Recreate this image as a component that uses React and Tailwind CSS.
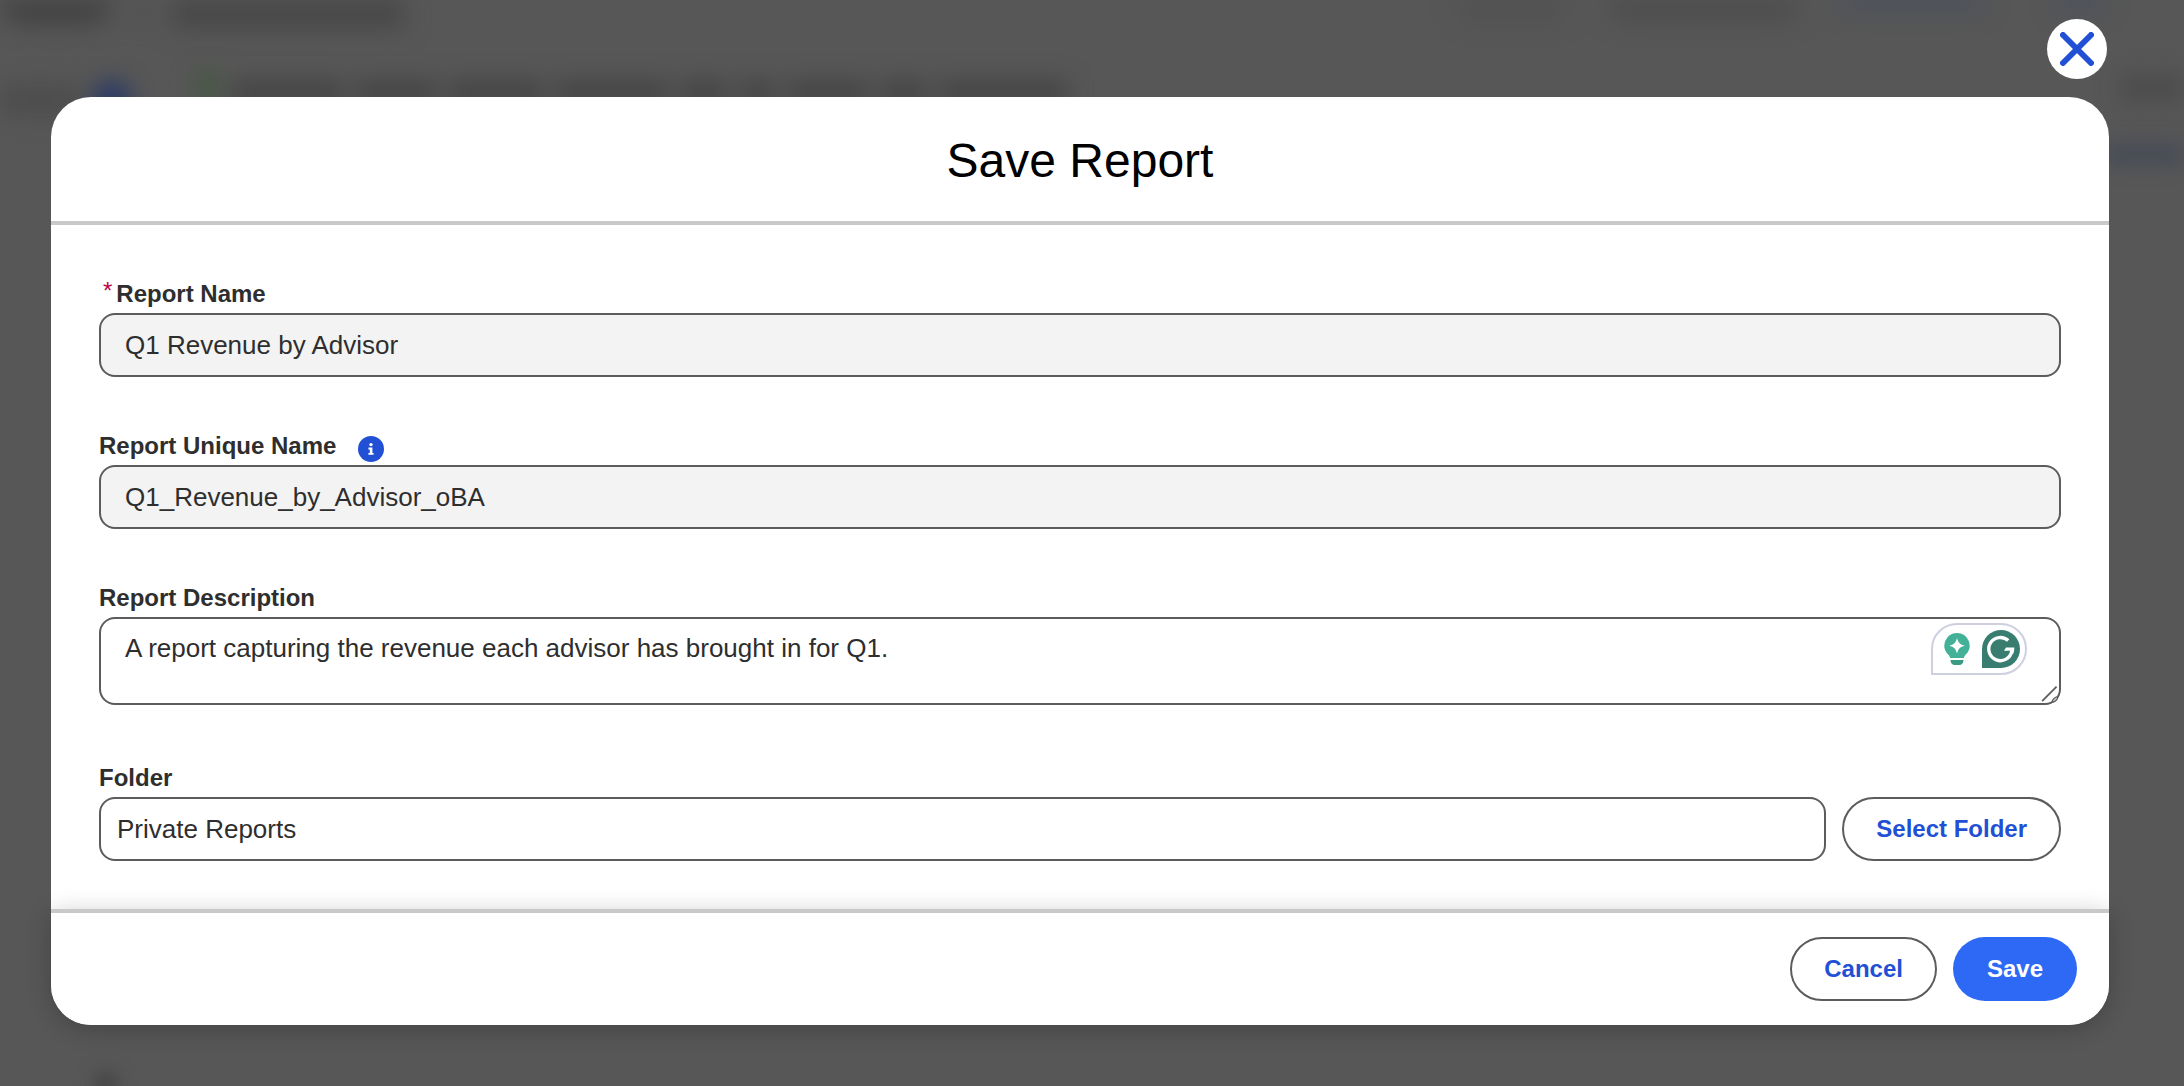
import React, { useState } from "react";

const inputClass =
    "block w-full h-16 rounded-2xl border-2 border-[#5c5c5c] text-[26px] text-[#2e2e2e] outline-none";
const labelClass = "flex h-9 text-2xl leading-[34px] font-bold text-[#2e2e2e]";
const outlineButton =
    "h-16 shrink-0 rounded-full border-2 border-[#5c5c5c] bg-white px-8 text-2xl font-bold text-[#2250d4]";

// dimmed page that shows around the dialog
function Backdrop() {
    return (
        <div aria-hidden="true" className="absolute inset-0 overflow-hidden">
            <div className="flex h-9 items-start justify-between">
                <div className="flex gap-6 blur-[12px]">
                    <div className="h-6 w-28 rounded-b-full bg-[#404040]" />
                    <div className="h-5 w-3 bg-[#4c4c4c]" />
                    <div className="h-7 w-58 bg-[#474747]" />
                </div>
                <div className="flex gap-10 blur-[12px]">
                    <div className="h-5 w-28 rounded-b-full bg-[#505050]" />
                    <div className="h-5 w-48 rounded-b-full bg-[#4b4b4b]" />
                    <div className="mr-8 h-2 w-36 bg-[#404b63]" />
                    <div className="mr-20 h-2 w-12 bg-[#404b63]" />
                </div>
            </div>
            <div className="mt-9 flex items-start blur-[11px]">
                <div className="mt-3 h-8 w-20 bg-[#4d4d4d]" />
                <div className="ml-3 mt-2 size-10 rounded-full bg-[#2c3b66]" />
                <div className="ml-16 h-7 w-6 bg-[#465843]" />
                <div className="ml-3 flex gap-3 pt-2">
                    <div className="h-6 w-28 bg-[#454545]" />
                    <div className="h-6 w-20 bg-[#454545]" />
                    <div className="h-6 w-24 bg-[#454545]" />
                    <div className="h-6 w-28 bg-[#454545]" />
                    <div className="h-6 w-12 bg-[#454545]" />
                    <div className="h-6 w-9 bg-[#454545]" />
                    <div className="h-6 w-20 bg-[#454545]" />
                    <div className="h-6 w-12 bg-[#454545]" />
                    <div className="h-6 w-32 bg-[#454545]" />
                </div>
                <div className="mt-1 ml-auto h-6 w-16 bg-[#4b4b4b]" />
            </div>
            <div className="mt-6 ml-auto h-5 w-20 bg-[#454a56] blur-[10px]" />
            <div className="absolute -bottom-2 left-24 size-5 bg-[#404040] blur-[9px]" />
        </div>
    );
}

function InfoIcon() {
    return (
        <svg viewBox="0 0 26 26" className="size-[26px]" aria-hidden="true">
            <circle cx="13" cy="13" r="13" fill="#2250d4" />
            <circle cx="13" cy="8.6" r="1.7" fill="#fff" />
            <path d="M10.4 11.6h4v5.3h1.2v1.8h-5.2v-1.8h1.4v-3.5h-1.4z" fill="#fff" />
        </svg>
    );
}

function BulbIcon() {
    return (
        <svg viewBox="0 0 26 32" className="h-8 w-[26px]" aria-hidden="true">
            <path d="M13 0a12.6 12.6 0 0 0-8.8 21.6c1 1 1.6 2 1.9 3.4h13.8c.3-1.4.9-2.4 1.9-3.4A12.6 12.6 0 0 0 13 0z" fill="#43b197" />
            <path d="M6.5 27h13c0 3-2 5-4.500 5h-4c-2.500 0-4.500-2-4.500-5z" fill="#3a9a84" />
            <path d="M13 5c1.300 4.800 3 6.500 7.800 7.800-4.800 1.300-6.500 3-7.800 7.800-1.300-4.800-3-6.500-7.800-7.800 4.800-1.300 6.500-3 7.800-7.800z" fill="#fff" />
        </svg>
    );
}

function GrammarIcon() {
    return (
        <svg viewBox="0 0 38 38" className="size-[38px]" aria-hidden="true">
            <path d="M19 0a19 19 0 1 1 0 38H0V19A19 19 0 0 1 19 0z" fill="#387d70" />
            <path d="M26.200 10.500A11.600 11.600 0 1 0 29.800 21" fill="none" stroke="#fff" strokeWidth="3.400" />
            <path d="M24 17.500h8.300c0 2.500-.3 4.200-1 6.200l-3.300-.9.600-2h-6.600z" fill="#fff" />
        </svg>
    );
}

export default function App() {
    const [name, setName] = useState("Q1 Revenue by Advisor");
    const [uniqueName, setUniqueName] = useState("Q1_Revenue_by_Advisor_oBA");
    const [description, setDescription] = useState(
        "A report capturing the revenue each advisor has brought in for Q1."
    );
    const [folder, setFolder] = useState("Private Reports");

    return (
        <div className="relative min-h-screen bg-[#575757] font-['Liberation_Sans',Arial,sans-serif]">
            <Backdrop />

            <div className="relative flex min-h-screen flex-col pt-[19px] pr-[75px] pb-[61px] pl-[51px]">
                <button
                    aria-label="Close"
                    className="mr-0.5 mb-[18px] flex size-[60px] items-center justify-center self-end rounded-full bg-white"
                >
                    <svg viewBox="0 0 34 34" className="size-[34px]" aria-hidden="true">
                        <path d="M3 3l28 28M31 3L3 31" stroke="#2250d4" strokeWidth="6" strokeLinecap="round" />
                    </svg>
                </button>

                <form
                    role="dialog"
                    aria-labelledby="dialog-title"
                    onSubmit={(e) => e.preventDefault()}
                    className="flex grow flex-col rounded-[40px] bg-white"
                >
                    <header className="border-b-4 border-[#c9c9c9] pt-[34px] pb-[30px] text-center">
                        <h1 id="dialog-title" className="text-5xl leading-[60px] text-black">Save Report</h1>
                    </header>

                    <div className="flex grow flex-col px-12 pt-[52px] pb-12">
                        <label htmlFor="name" className={labelClass}>
                            <span className="px-1 leading-7 font-normal text-[#ba0547]">*</span>
                            Report Name
                        </label>
                        <input
                            id="name"
                            type="text"
                            value={name}
                            onChange={(e) => setName(e.target.value)}
                            className={`${inputClass} bg-[#f3f3f3] px-6`}
                        />

                        <div className="mt-[52px] flex gap-[22px]">
                            <label htmlFor="unique-name" className={labelClass}>Report Unique Name</label>
                            <button type="button" aria-label="Help" className="mt-[7px] size-[26px]">
                                <InfoIcon />
                            </button>
                        </div>
                        <input
                            id="unique-name"
                            type="text"
                            value={uniqueName}
                            onChange={(e) => setUniqueName(e.target.value)}
                            className={`${inputClass} bg-[#f3f3f3] px-6`}
                        />

                        <label htmlFor="description" className={`${labelClass} mt-[52px]`}>Report Description</label>
                        <div className="relative">
                            <textarea
                                id="description"
                                value={description}
                                onChange={(e) => setDescription(e.target.value)}
                                className="block h-[88px] w-full resize-none rounded-2xl border-2 border-[#5c5c5c] bg-white px-6 py-2 text-[26px] leading-[42px] text-[#2e2e2e] outline-none"
                            />
                            <div className="absolute top-1.5 right-[34px] flex h-[52px] items-center gap-3 rounded-full rounded-bl-none border-2 border-[#ced0e0] bg-white pr-[5px] pl-[11px]">
                                <BulbIcon />
                                <GrammarIcon />
                            </div>
                            <svg viewBox="0 0 18 18" className="absolute right-0 bottom-0 size-5" aria-hidden="true">
                                <path d="M1 14.500L14 1.500" stroke="#5c5c5c" strokeWidth="1.600" />
                                <path d="M9.500 15.500c1-2.500 3-4.500 5.500-5 .5 2.500-2.500 5-5.500 5z" fill="#c4c4c4" stroke="#5c5c5c" />
                            </svg>
                        </div>

                        <label htmlFor="folder" className={`${labelClass} mt-14`}>Folder</label>
                        <div className="flex gap-4">
                            <input
                                id="folder"
                                type="text"
                                value={folder}
                                onChange={(e) => setFolder(e.target.value)}
                                className={`${inputClass} min-w-0 bg-white px-4`}
                            />
                            <button type="button" className={outlineButton}>Select Folder</button>
                        </div>
                    </div>

                    <footer className="flex justify-end gap-4 rounded-b-[40px] border-t-4 border-[#c9c9c9] bg-white px-8 py-6 shadow-[0_4px_24px_rgba(0,0,0,0.22)]">
                        <button type="button" className={outlineButton}>Cancel</button>
                        <button type="submit" className="h-16 rounded-full bg-[#2e69f5] px-[34px] text-2xl font-bold text-white">
                            Save
                        </button>
                    </footer>
                </form>
            </div>
        </div>
    );
}
